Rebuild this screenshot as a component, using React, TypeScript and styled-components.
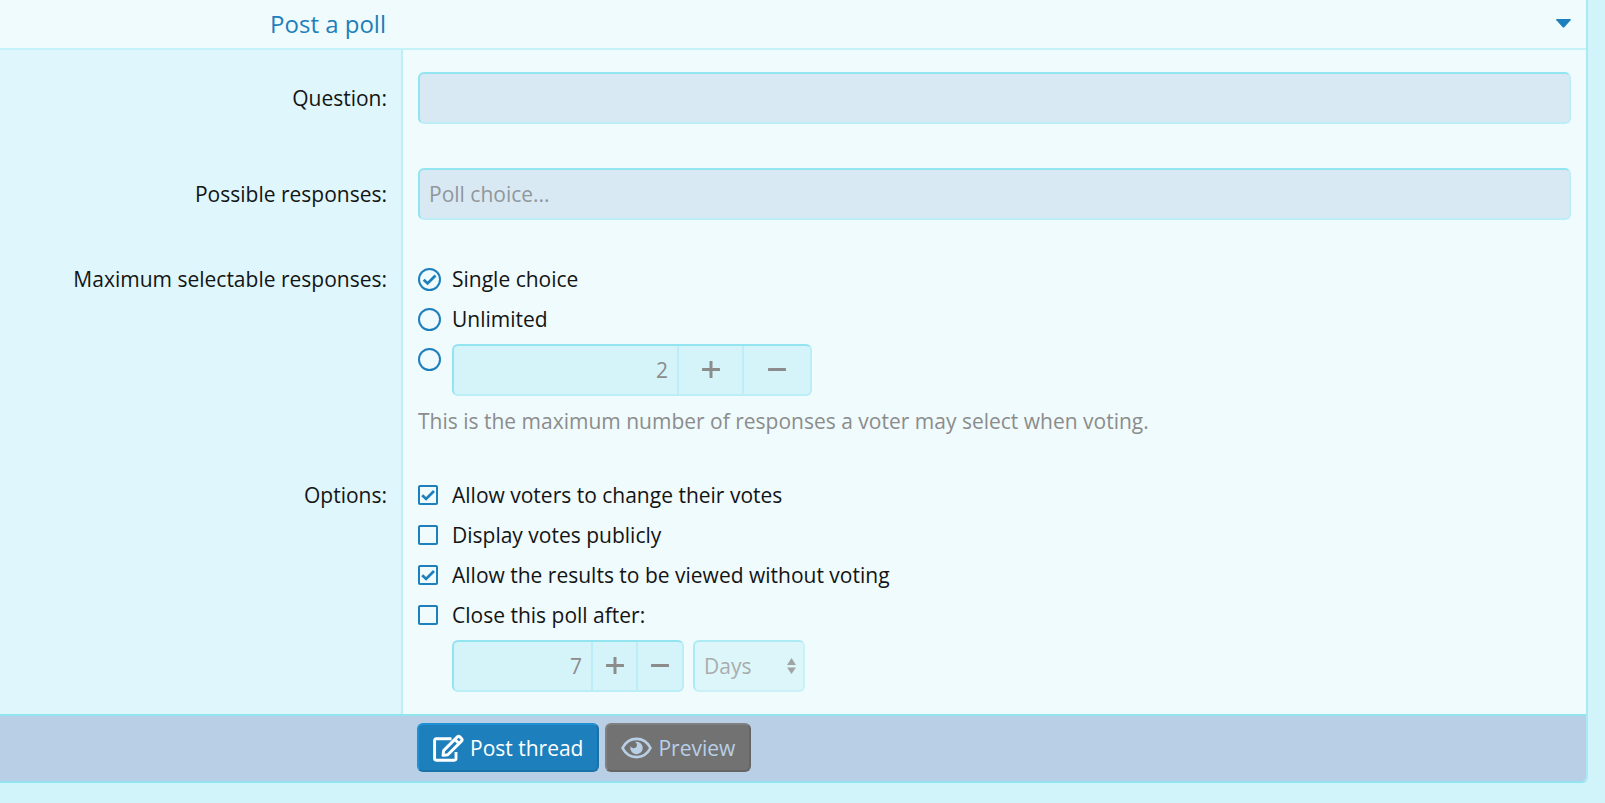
import React, { useState } from "react";
import styled, { createGlobalStyle } from "styled-components";

const Global = createGlobalStyle`
  * { box-sizing: border-box; }
  body { margin: 0; background: #d1f3fa; color: #141414; }
  body, input, select, button {
    font-family: "Open Sans", "Noto Sans", sans-serif;
    font-size: 21px;
    line-height: 30px;
  }
`;

const Page = styled.main`
  padding-right: 17px;
`;

const Panel = styled.form`
  border-right: 2px solid #ade9f5;
  border-bottom: 2px solid #93e4f1;
  border-bottom-right-radius: 6px;
  background: #effbfd;
  overflow: hidden;
`;

const Header = styled.button`
  display: flex;
  align-items: center;
  justify-content: space-between;
  width: 100%;
  height: 50px;
  padding: 0 15px 0 0;
  border: 0;
  border-bottom: 2px solid #c5f1f9;
  background: transparent;
  color: #1d7fbb;
  font-size: 24px;
`;

const HeaderTitle = styled.span`
  width: 403px;
  padding-right: 17px;
  text-align: right;
`;

const Row = styled.div`
  display: flex;
`;

const LabelCell = styled.div<{ $beside?: boolean }>`
  flex: 0 0 403px;
  padding: ${(p) => (p.$beside ? "33px" : "22px")} 14px 0 15px;
  border-right: 2px solid #bbeef7;
  background: #dff7fc;
  text-align: right;
`;

const FieldCell = styled.div`
  flex: 1;
  min-width: 0;
  display: flex;
  flex-direction: column;
  gap: 10px;
  padding: 22px 15px;
`;

const TextInput = styled.input`
  width: 100%;
  height: 52px;
  padding: 0 9px;
  border: 2px solid #bbeef7;
  border-top-color: #93e4f1;
  border-left-color: #93e4f1;
  border-radius: 6px;
  background: #d9e9f3;
  outline: none;
  &::placeholder { color: #8f979b; opacity: 1; }
`;

const Choice = styled.div`
  display: flex;
  align-items: flex-start;
`;

const ChoiceLabel = styled.label`
  display: flex;
  align-items: flex-start;
`;

const Mark = styled.span`
  display: grid;
  flex: 0 0 34px;
  height: 30px;
  align-items: center;
  justify-items: start;
  & > * { grid-area: 1 / 1; }
`;

const Tick = styled.input<{ $size: number }>`
  appearance: none;
  width: ${(p) => p.$size}px;
  height: ${(p) => p.$size}px;
  margin: 0;
  border: 2px solid #1d7fbb;
  border-radius: ${(p) => (p.type === "radio" ? "50%" : "2px")};
  & + svg { visibility: hidden; pointer-events: none; }
  &:checked + svg { visibility: visible; }
`;

const Hint = styled.p`
  margin: 0;
  color: #8c8c8c;
`;

const NumberGroup = styled.div<{ $width: number }>`
  display: flex;
  width: ${(p) => p.$width}px;
  height: 52px;
  border: 2px solid #bbeef7;
  border-top-color: #93e4f1;
  border-left-color: #93e4f1;
  border-radius: 6px;
  background: #d5f4f9;
`;

const NumberInput = styled.input`
  flex: 1;
  min-width: 0;
  padding: 0 9px;
  border: 0;
  background: transparent;
  color: #8c8c8c;
  text-align: right;
  outline: none;
`;

const StepButton = styled.button<{ $width: number }>`
  display: flex;
  align-items: center;
  justify-content: center;
  width: ${(p) => p.$width}px;
  padding: 0;
  border: 0;
  border-left: 2px solid #bbeef7;
  background: transparent;
  color: #8c8c8c;
`;

const CloseControls = styled.div`
  display: flex;
  gap: 9px;
  padding-left: 34px;
`;

const SelectBox = styled.div`
  display: grid;
  width: 112px;
  height: 52px;
  opacity: 0.7;
  & > * { grid-area: 1 / 1; }
  & > svg { align-self: center; justify-self: end; margin-right: 9px; pointer-events: none; }
`;

const Select = styled.select`
  appearance: none;
  padding: 0 9px;
  border: 2px solid #bbeef7;
  border-top-color: #93e4f1;
  border-left-color: #93e4f1;
  border-radius: 6px;
  background: #d5f4f9;
  color: #8c8c8c;
`;

const Footer = styled.div`
  display: flex;
  gap: 6px;
  padding: 7px 15px 9px 417px;
  border-top: 2px solid #93e4f1;
  background: #b9cfe6;
`;

const ActionButton = styled.button<{ $primary?: boolean }>`
  display: flex;
  align-items: center;
  gap: 6px;
  height: 49px;
  padding: 0 14px;
  border: 2px solid;
  border-color: ${(p) => (p.$primary ? "#2090d4 #1a71a6 #1a71a6 #2090d4" : "#808080 #656565 #656565 #808080")};
  border-radius: 6px;
  background: ${(p) => (p.$primary ? "#1d7fbb" : "#727272")};
  color: ${(p) => (p.$primary ? "#ffffff" : "#b9cfe6")};
`;

const CaretIcon = () => (
  <svg width="15" height="10" viewBox="0 0 15 10" fill="currentColor" aria-hidden="true">
    <path d="M0.8 0H14.2Q15.2 0.3 14.6 1.2L8.3 8.2Q7.500 8.900 6.700 8.200L0.400 1.200Q-0.200 0.300 0.800 0Z" />
  </svg>
);

const CheckIcon = ({ size }: { size: number }) => (
  <svg width={size} height={size} viewBox={`${-size / 2} ${-size / 2} ${size} ${size}`} fill="none" stroke="#1d7fbb" strokeWidth="2.8" aria-hidden="true">
    <path d="M-5.800 0.200L-1.900 3.900L6 -4" />
  </svg>
);

const StepIcon = ({ plus }: { plus?: boolean }) => (
  <svg width="18" height="18" viewBox="0 0 18 18" fill="currentColor" aria-hidden="true">
    <rect x="0" y="7" width="18" height="3" rx="0.5" />
    {plus && <rect x="7.5" y="0" width="3" height="17" rx="0.5" />}
  </svg>
);

const SortIcon = () => (
  <svg width="9" height="16" viewBox="0 0 9 16" fill="#808080" aria-hidden="true">
    <path d="M4.5 0L9 7H0zM4.5 16L0 9.500h9z" />
  </svg>
);

const EditIcon = () => (
  <svg width="31" height="28" viewBox="0 0 31 28" fill="none" stroke="currentColor" strokeWidth="2.9" strokeLinejoin="round" aria-hidden="true">
    <path d="M18.5 4.8H3.2Q1.6 4.8 1.6 6.4V24.6Q1.6 26.2 3.2 26.2H21.4Q23 26.2 23 24.6V18" />
    <path d="M10.6 16.6L24.3 2.9Q25.6 1.600 26.900 2.900L28.500 4.500Q29.800 5.800 28.500 7.100L14.800 20.800L10 21.400Z" />
    <path d="M21.800 5.400L26 9.600" />
  </svg>
);

const EyeIcon = () => (
  <svg width="31" height="22" viewBox="0 0 31 22" aria-hidden="true">
    <path d="M1.500 11C4.500 5.200 9.600 1.900 15.500 1.900S26.500 5.200 29.500 11C26.500 16.800 21.400 20.100 15.500 20.100S4.500 16.800 1.500 11Z" fill="none" stroke="currentColor" strokeWidth="2.700" strokeLinejoin="round" />
    <path d="M15.500 4.800A6.200 6.200 0 1 1 9.700 8.900A3.200 3.200 0 1 0 13.800 5Q14.600 4.800 15.500 4.800Z" fill="currentColor" />
  </svg>
);

type StepperProps = { label: string; value: number; onChange: (n: number) => void; width: number; plus: number; minus: number };

const Stepper = ({ label, value, onChange, width, plus, minus }: StepperProps) => (
  <NumberGroup $width={width}>
    <NumberInput aria-label={label} inputMode="numeric" value={value} onChange={(e) => onChange(Number(e.target.value) || 0)} />
    <StepButton type="button" $width={plus} aria-label="Increase" onClick={() => onChange(value + 1)}>
      <StepIcon plus />
    </StepButton>
    <StepButton type="button" $width={minus} aria-label="Decrease" onClick={() => onChange(Math.max(1, value - 1))}>
      <StepIcon />
    </StepButton>
  </NumberGroup>
);

const options = [
  { text: "Allow voters to change their votes", on: true },
  { text: "Display votes publicly", on: false },
  { text: "Allow the results to be viewed without voting", on: true },
  { text: "Close this poll after:", on: false },
];

export default function App() {
  const [maxVotes, setMaxVotes] = useState(2);
  const [days, setDays] = useState(7);

  return (
    <Page>
      <Global />
      <Panel onSubmit={(e) => e.preventDefault()}>
        <Header type="button">
          <HeaderTitle>Post a poll</HeaderTitle>
          <CaretIcon />
        </Header>
        <Row>
          <LabelCell $beside>
            <label htmlFor="question">Question:</label>
          </LabelCell>
          <FieldCell>
            <TextInput id="question" type="text" />
          </FieldCell>
        </Row>
        <Row>
          <LabelCell $beside>
            <label htmlFor="response">Possible responses:</label>
          </LabelCell>
          <FieldCell>
            <TextInput id="response" type="text" placeholder="Poll choice..." />
          </FieldCell>
        </Row>
        <Row role="radiogroup" aria-labelledby="max-label">
          <LabelCell id="max-label">Maximum selectable responses:</LabelCell>
          <FieldCell>
            {["Single choice", "Unlimited"].map((text, i) => (
              <ChoiceLabel key={text}>
                <Mark>
                  <Tick type="radio" name="max" $size={23} defaultChecked={i === 0} />
                  <CheckIcon size={23} />
                </Mark>
                {text}
              </ChoiceLabel>
            ))}
            <Choice>
              <Mark>
                <Tick type="radio" name="max" $size={23} aria-label="Limited number of responses" />
                <CheckIcon size={23} />
              </Mark>
              <Stepper label="Maximum responses" value={maxVotes} onChange={setMaxVotes} width={360} plus={65} minus={68} />
            </Choice>
            <Hint>This is the maximum number of responses a voter may select when voting.</Hint>
          </FieldCell>
        </Row>
        <Row role="group" aria-labelledby="options-label">
          <LabelCell id="options-label">Options:</LabelCell>
          <FieldCell>
            {options.map((o) => (
              <ChoiceLabel key={o.text}>
                <Mark>
                  <Tick type="checkbox" $size={20} defaultChecked={o.on} />
                  <CheckIcon size={20} />
                </Mark>
                {o.text}
              </ChoiceLabel>
            ))}
            <CloseControls>
              <Stepper label="Close after" value={days} onChange={setDays} width={232} plus={45} minus={46} />
              <SelectBox>
                <Select aria-label="Unit of time" defaultValue="Days">
                  <option>Days</option>
                  <option>Weeks</option>
                  <option>Months</option>
                </Select>
                <SortIcon />
              </SelectBox>
            </CloseControls>
          </FieldCell>
        </Row>
        <Footer>
          <ActionButton type="submit" $primary>
            <EditIcon />
            Post thread
          </ActionButton>
          <ActionButton type="button">
            <EyeIcon />
            Preview
          </ActionButton>
        </Footer>
      </Panel>
    </Page>
  );
}
